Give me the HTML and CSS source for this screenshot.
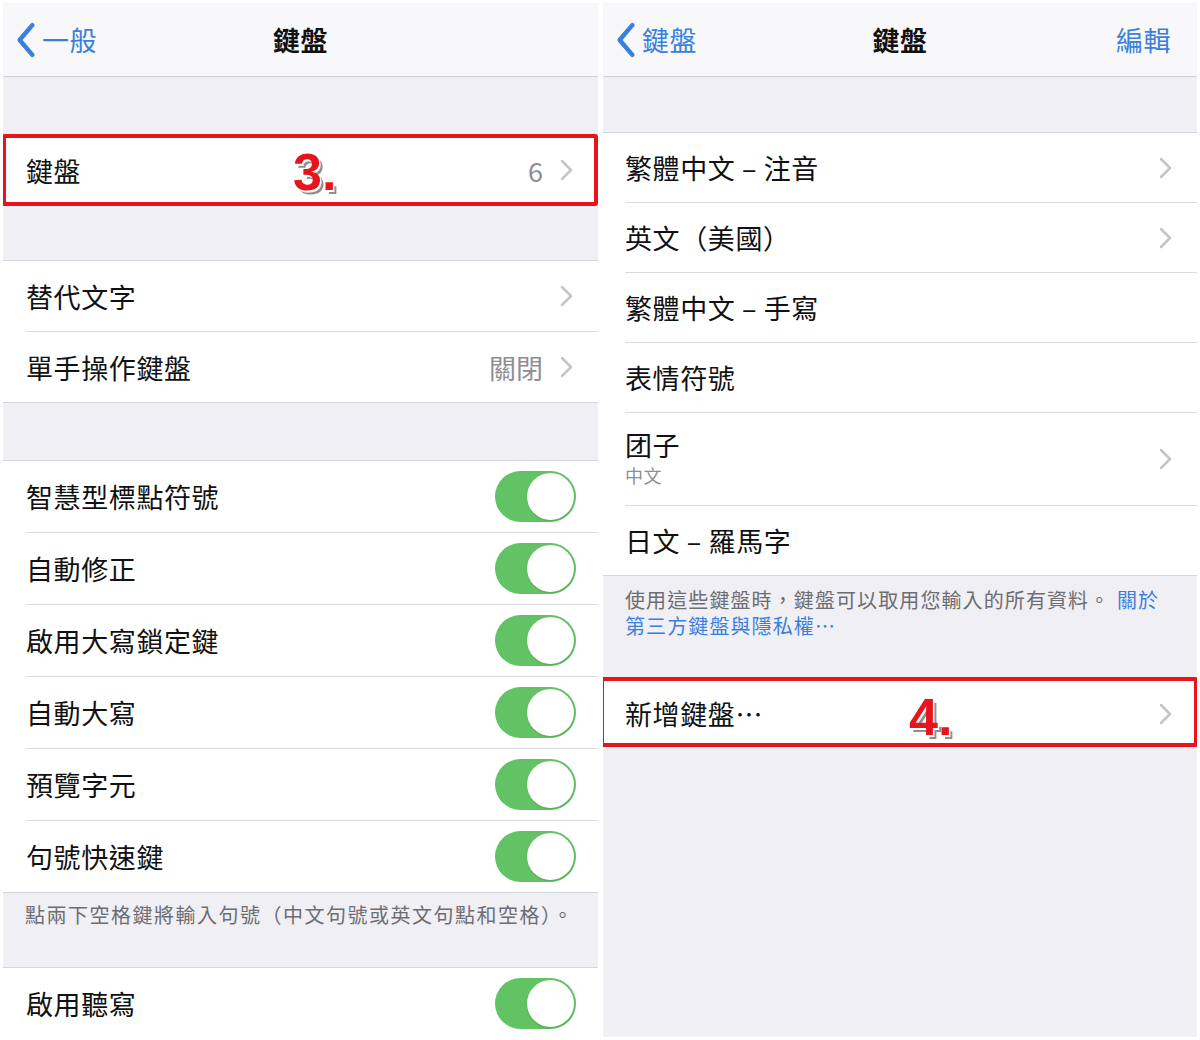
FILE: index.html
```html
<html>
	<head>
		<meta charset="utf-8">
		<link rel="stylesheet" href="styles.css">
	</head>
	<body>
		<div class="screens">

			<!-- settings > general > keyboard -->
			<section class="screen">
				<header class="nav">
					<a class="nav-back" href="#">
						<svg class="back-icon" viewBox="0 0 20 34"><path d="M16 3 L4 17 L16 31"/></svg>
						一般
					</a>
					<h1 class="nav-title">鍵盤</h1>
					<span class="nav-action"></span>
				</header>

				<ul class="group group-first-left marked">
					<li class="row">
						<div class="row-body">
							<span class="label">鍵盤</span>
							<span class="value">6</span>
							<svg class="chevron" viewBox="0 0 13 22"><path d="M2 2 L11 11 L2 20"/></svg>
						</div>
						<span class="step step-3">3.</span>
					</li>
					<span class="mark-box mark-box-left"></span>
				</ul>

				<ul class="group group-second">
					<li class="row">
						<div class="row-body">
							<span class="label">替代文字</span>
							<svg class="chevron" viewBox="0 0 13 22"><path d="M2 2 L11 11 L2 20"/></svg>
						</div>
					</li>
					<li class="row">
						<div class="row-body">
							<span class="label">單手操作鍵盤</span>
							<span class="value">關閉</span>
							<svg class="chevron" viewBox="0 0 13 22"><path d="M2 2 L11 11 L2 20"/></svg>
						</div>
					</li>
				</ul>

				<ul class="group group-toggles">
					<li class="row">
						<div class="row-body">
							<span class="label">智慧型標點符號</span>
							<span class="toggle"><span class="knob"></span></span>
						</div>
					</li>
					<li class="row">
						<div class="row-body">
							<span class="label">自動修正</span>
							<span class="toggle"><span class="knob"></span></span>
						</div>
					</li>
					<li class="row">
						<div class="row-body">
							<span class="label">啟用大寫鎖定鍵</span>
							<span class="toggle"><span class="knob"></span></span>
						</div>
					</li>
					<li class="row">
						<div class="row-body">
							<span class="label">自動大寫</span>
							<span class="toggle"><span class="knob"></span></span>
						</div>
					</li>
					<li class="row">
						<div class="row-body">
							<span class="label">預覽字元</span>
							<span class="toggle"><span class="knob"></span></span>
						</div>
					</li>
					<li class="row">
						<div class="row-body">
							<span class="label">句號快速鍵</span>
							<span class="toggle"><span class="knob"></span></span>
						</div>
					</li>
				</ul>
				<p class="footnote footnote-left">點兩下空格鍵將輸入句號（中文句號或英文句點和空格）。</p>

				<ul class="group group-last">
					<li class="row">
						<div class="row-body">
							<span class="label">啟用聽寫</span>
							<span class="toggle"><span class="knob"></span></span>
						</div>
					</li>
				</ul>
			</section>

			<!-- keyboard > keyboards -->
			<section class="screen screen-right">
				<header class="nav">
					<a class="nav-back" href="#">
						<svg class="back-icon" viewBox="0 0 20 34"><path d="M16 3 L4 17 L16 31"/></svg>
						鍵盤
					</a>
					<h1 class="nav-title">鍵盤</h1>
					<a class="nav-action" href="#">編輯</a>
				</header>

				<ul class="group group-keyboards">
					<li class="row">
						<div class="row-body">
							<span class="label">繁體中文 – 注音</span>
							<svg class="chevron" viewBox="0 0 13 22"><path d="M2 2 L11 11 L2 20"/></svg>
						</div>
					</li>
					<li class="row">
						<div class="row-body">
							<span class="label">英文（美國）</span>
							<svg class="chevron" viewBox="0 0 13 22"><path d="M2 2 L11 11 L2 20"/></svg>
						</div>
					</li>
					<li class="row">
						<div class="row-body">
							<span class="label">繁體中文 – 手寫</span>
						</div>
					</li>
					<li class="row">
						<div class="row-body">
							<span class="label">表情符號</span>
						</div>
					</li>
					<li class="row row-double">
						<div class="row-body">
							<span class="label">
								<span class="label-title">团子</span>
								<span class="label-sub">中文</span>
							</span>
							<svg class="chevron" viewBox="0 0 13 22"><path d="M2 2 L11 11 L2 20"/></svg>
						</div>
					</li>
					<li class="row">
						<div class="row-body">
							<span class="label">日文 – 羅馬字</span>
						</div>
					</li>
				</ul>
				<p class="footnote footnote-right">使用這些鍵盤時，鍵盤可以取用您輸入的所有資料。 <a href="#">關於</a><br><a href="#">第三方鍵盤與隱私權⋯</a></p>

				<ul class="group group-add marked">
					<li class="row">
						<div class="row-body">
							<span class="label">新增鍵盤⋯</span>
							<svg class="chevron" viewBox="0 0 13 22"><path d="M2 2 L11 11 L2 20"/></svg>
						</div>
						<span class="step step-4">4.</span>
					</li>
					<span class="mark-box mark-box-right"></span>
				</ul>
			</section>

		</div>
	</body>
</html>
```

FILE: styles.css
```css
html, body {
	margin: 0;
	padding: 0;
	background: #ffffff;
	font-family: "Noto Sans CJK TC", "Noto Sans", sans-serif;
	color: #111111;
}
.screens {
	display: flex;
	gap: 5px;
	padding: 3px 3px 0 3px;
}
.screen {
	width: 595px;
	height: 1034px;
	overflow: hidden;
	background: #f0eff4;
}
.screen-right {
	width: 594px;
}

/* navigation bar */
.nav {
	display: grid;
	grid-template-columns: 1fr auto 1fr;
	align-items: center;
	height: 73px;
	background: #f8f8fa;
	border-bottom: 1px solid #cfcfd3;
}
.nav a {
	text-decoration: none;
	color: #3a7fdc;
}
.nav-back {
	display: flex;
	align-items: center;
	gap: 5px;
	padding-left: 12px;
	font-size: 27px;
	letter-spacing: 0.5px;
}
.back-icon {
	width: 22px;
	height: 36px;
	fill: none;
	stroke: #3a7fdc;
	stroke-width: 4.2;
	stroke-linecap: round;
	stroke-linejoin: round;
}
.nav-title {
	margin: 0;
	font-size: 27px;
	font-weight: 700;
	letter-spacing: 0.5px;
}
.nav-action {
	justify-self: end;
	padding-right: 26px;
	font-size: 27px;
	letter-spacing: 0.5px;
}

/* grouped table */
.group {
	list-style: none;
	margin: 0;
	padding: 0;
	background: #ffffff;
	border-top: 1px solid #d6d6da;
	border-bottom: 1px solid #d6d6da;
}
.marked {
	position: relative;
}
.group-first-left {
	margin-top: 57px;
}
.group-second {
	margin-top: 54px;
}
.group-toggles {
	margin-top: 57px;
}
.group-last {
	border-bottom: none;
}
.group-keyboards {
	margin-top: 55px;
}
.row {
	position: relative;
	padding-left: 23px;
}
.screen-right .row {
	padding-left: 22px;
}
.row-body {
	display: flex;
	align-items: center;
	height: 70px;
	padding-right: 22px;
}
.row + .row .row-body {
	border-top: 1px solid #dcdce0;
}
.group-toggles .row-body {
	height: 71px;
}
.group-keyboards .row-body {
	height: 69px;
}
.group-keyboards .row-double .row-body {
	height: 92px;
}
.group-add .row-body {
	height: 65px;
}
.label {
	flex: 1;
	font-size: 27px;
	letter-spacing: 0.6px;
}
.label-title {
	display: block;
	line-height: 34px;
	margin-top: -2px;
}
.label-sub {
	display: block;
	font-size: 18px;
	line-height: 26px;
	color: #8e8e93;
}
.value {
	margin-right: 17px;
	font-size: 27px;
	color: #8e8e93;
}
.chevron {
	width: 13px;
	height: 22px;
	margin-right: 3px;
	fill: none;
	stroke: #c4c4c9;
	stroke-width: 2.5;
	stroke-linecap: round;
	stroke-linejoin: round;
}

/* switch */
.toggle {
	display: flex;
	justify-content: flex-end;
	align-items: center;
	box-sizing: border-box;
	width: 81px;
	height: 51px;
	padding: 2px;
	border-radius: 26px;
	background: #62c365;
}
.knob {
	width: 47px;
	height: 47px;
	border-radius: 50%;
	background: #ffffff;
	box-shadow: 0 1px 2px rgba(0, 0, 0, 0.15);
}

/* footers */
.footnote {
	margin: 0;
	padding: 9px 22px 0 22px;
	font-family: "Liberation Sans", "Noto Sans CJK TC", sans-serif;
	font-size: 20px;
	line-height: 28px;
	letter-spacing: 1.5px;
	color: #6d6d72;
}
.footnote-left {
	height: 65px;
}
.footnote-right {
	height: 92px;
	padding-top: 12px;
	line-height: 26px;
	letter-spacing: 1.1px;
}
.footnote a {
	color: #3a7fdc;
	text-decoration: none;
}

/* annotations */
.mark-box {
	position: absolute;
	box-sizing: border-box;
	border: 4px solid #e8141b;
	border-radius: 3px;
}
.mark-box-left {
	top: -1px;
	bottom: -1px;
	left: -1px;
	right: 0;
}
.mark-box-right {
	top: -4px;
	bottom: -1px;
	left: -3px;
	right: -1px;
}
.step {
	position: absolute;
	font-family: "Liberation Sans", Arial, sans-serif;
	font-weight: 700;
	font-size: 52px;
	line-height: 1;
	color: #e8141b;
	text-shadow: 1.5px 1.5px 0 #ffffff, 3.5px 3.5px 0 #8f8f8f;
}
.step-3 {
	left: 290px;
	top: 11px;
}
.step-4 {
	left: 306px;
	top: 10px;
}
```
